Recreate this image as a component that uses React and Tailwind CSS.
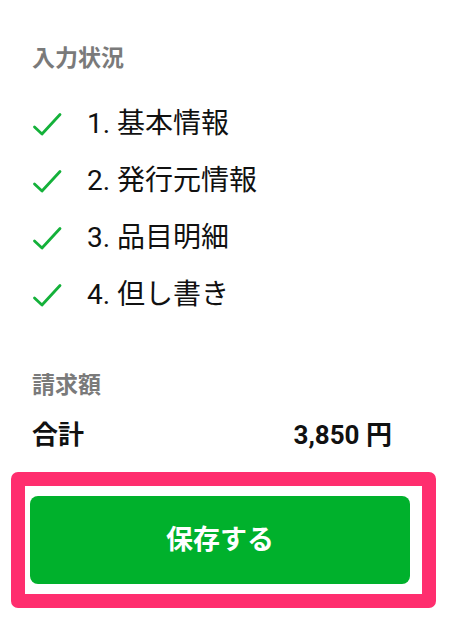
const font = { fontFamily: 'Roboto, "Noto Sans CJK JP", sans-serif' }

function Check() {
  return (
    <svg width="30" height="24" viewBox="0 0 30 24" fill="none" className="shrink-0">
      <path d="M2.5 15 L10 22 L28 2.5" stroke="#14b13a" strokeWidth="2.8" strokeLinecap="round" strokeLinejoin="round" />
    </svg>
  )
}

const steps = ['1. 基本情報', '2. 発行元情報', '3. 品目明細', '4. 但し書き']

export default function App() {
  return (
    <div className="w-[450px] h-[626px] bg-white overflow-hidden" style={font}>
      <div className="px-[32px] pt-[44px]">
        <h2 className="text-[23px] font-bold text-[#7a7a7a] leading-[30px]">入力状況</h2>
        <ul className="mt-[35px] space-y-[27px]">
          {steps.map(s => (
            <li key={s} className="flex items-center gap-[25px] h-[30px]">
              <Check />
              <span className="text-[28px] text-[#111] leading-[30px]">{s}</span>
            </li>
          ))}
        </ul>
        <h2 className="mt-[61px] text-[23px] font-bold text-[#7a7a7a] leading-[30px]">請求額</h2>
        <div className="mt-[19px] flex items-center justify-between pr-[26px]">
          <span className="text-[26px] font-bold text-[#111] leading-[30px]">合計</span>
          <span className="text-[26px] font-bold text-[#111] leading-[30px]">3,850 円</span>
        </div>
      </div>
      <div className="ml-[11px] mr-[14px] mt-[22px] rounded-[7px] border-[14px] border-[#ff2e6e] pl-[5px] pr-[12px] py-[10px]">
        <button className="w-full h-[88px] rounded-[8px] bg-[#00b12c] text-white text-[27px] font-bold">
          保存する
        </button>
      </div>
    </div>
  )
}
